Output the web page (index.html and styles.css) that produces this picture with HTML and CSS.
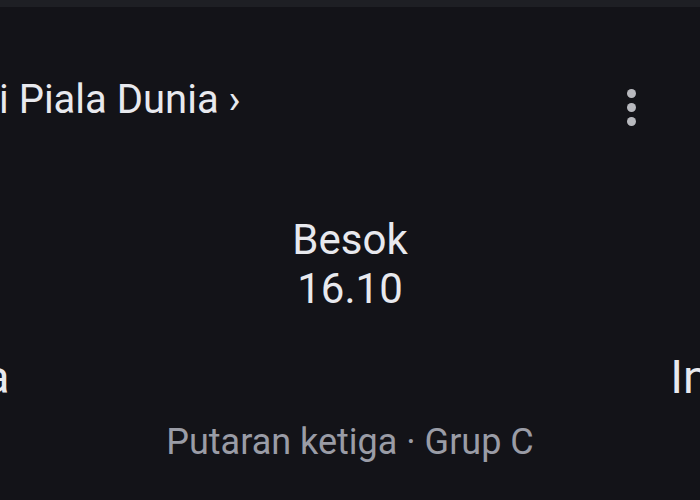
FILE: index.html
```html
<!DOCTYPE html>
<html>
<head>
<meta charset="utf-8">
<link rel="stylesheet" href="styles.css">
</head>
<body>
<div class="topbar"></div>
<div class="card">
  <div class="header">
    <div class="title">i Piala Dunia ›</div>
    <div class="menu"><span></span><span></span><span></span></div>
  </div>
  <div class="time">
    <div class="day">Besok</div>
    <div class="clock">16.10</div>
  </div>
  <div class="teams">
    <div class="team left">a</div>
    <div class="team right">In</div>
  </div>
  <div class="round">Putaran ketiga · Grup C</div>
</div>
</body>
</html>
```
FILE: styles.css
```css
html, body {
  margin: 0;
  padding: 0;
  background: #131318;
  width: 700px;
  height: 500px;
  overflow: hidden;
  font-family: Roboto, "Liberation Sans", sans-serif;
  color: #e8e9ee;
}
.topbar {
  height: 7px;
  background: #1e1f24;
}
.card {
  display: flex;
  flex-direction: column;
}
.header {
  display: flex;
  justify-content: space-between;
  align-items: center;
  height: 56px;
  margin-top: 64px;
  padding-right: 64px;
}
.title {
  font-size: 40px;
  margin-left: -1px;
}
.menu {
  display: flex;
  flex-direction: column;
  gap: 5px;
  margin-top: 16px;
}
.menu span {
  width: 9px;
  height: 9px;
  border-radius: 50%;
  background: #b8b9be;
}
.time {
  margin-top: 88px;
  text-align: center;
  font-size: 42px;
  line-height: 49px;
}
.teams {
  display: flex;
  justify-content: space-between;
  font-size: 47px;
  line-height: 56px;
  margin-top: 36px;
}
.team.left { margin-left: -16px; }
.team.right { margin-right: -9px; }
.round {
  text-align: center;
  color: #9a9ca6;
  font-size: 36px;
  line-height: 42px;
  margin-top: 16px;
}
```
